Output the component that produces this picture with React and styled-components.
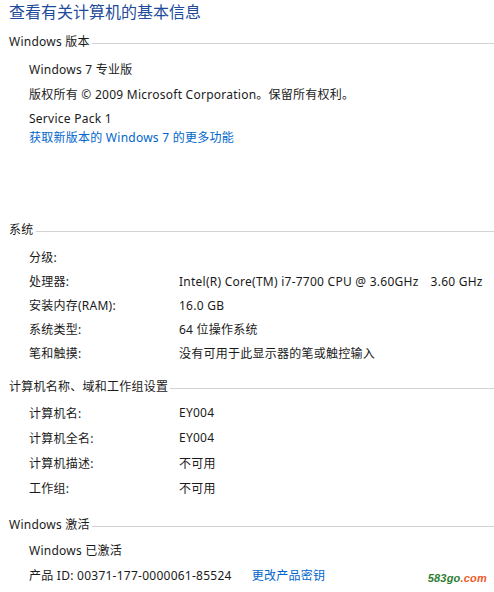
import React from "react";
import styled, { createGlobalStyle } from "styled-components";

const Global = createGlobalStyle`
  html, body { margin: 0; padding: 0; background: #fff; }
  body {
    font-family: "Noto Sans", "Noto Sans CJK SC", sans-serif;
    font-size: 12px;
    letter-spacing: 0.25px;
    color: #1a1a1a;
  }
`;

const Page = styled.div`
  width: 494px;
  height: 592px;
  padding: 0 0 0 9px;
  box-sizing: border-box;
  position: relative;
  overflow: hidden;
`;

const Title = styled.h1`
  margin: 0;
  font-family: "Noto Sans CJK SC", sans-serif;
  font-weight: 400;
  font-size: 16px;
  letter-spacing: 0;
  line-height: 22px;
  color: #1e4b9c;
`;

const Section = styled.section`
  margin-top: ${(p) => p.$top}px;
`;

const Heading = styled.div`
  display: flex;
  align-items: center;
  height: 16px;
  line-height: 16px;
  white-space: nowrap;
  &::after {
    content: "";
    flex: 1;
    height: 1px;
    margin-top: 3px;
    margin-left: 2px;
    background: #d2d2d2;
  }
`;

const List = styled.div`
  margin-top: ${(p) => p.$top}px;
  padding-left: 20px;
  display: flex;
  flex-direction: column;
`;

const Line = styled.div`
  height: ${(p) => p.$h}px;
  display: flex;
  align-items: center;
  white-space: nowrap;
  color: ${(p) => (p.$link ? "#0066cc" : "inherit")};
`;

const Label = styled.div`
  width: 150px;
  flex: none;
`;

const Value = styled.div`
  display: flex;
  gap: ${(p) => p.$gap || 0}px;
`;

const Link = styled.span`
  color: #0066cc;
  margin-left: ${(p) => p.$gap || 0}px;
`;

const Watermark = styled.div`
  position: absolute;
  right: 7px;
  bottom: 8px;
  font-family: "Liberation Sans", sans-serif;
  font-weight: 700;
  font-style: italic;
  font-size: 11px;
  letter-spacing: 0.2px;
  color: #2e7d32;
  span { color: #ee5a2a; }
`;

function Field({ label, children, h, gap }) {
  return (
    <Line $h={h}>
      <Label>{label}</Label>
      <Value $gap={gap}>{children}</Value>
    </Line>
  );
}

export default function App() {
  return (
    <Page>
      <Global />
      <Title>查看有关计算机的基本信息</Title>

      <Section $top={12}>
        <Heading>Windows 版本</Heading>
        <List $top={7}>
          <Line $h={24}>Windows 7 专业版</Line>
          <Line $h={25}>版权所有 © 2009 Microsoft Corporation。保留所有权利。</Line>
          <Line $h={24}>Service Pack 1</Line>
          <Line $h={14} $link>获取新版本的 Windows 7 的更多功能</Line>
        </List>
      </Section>

      <Section $top={78}>
        <Heading>系统</Heading>
        <List $top={7}>
          <Field h={24} label="分级:" />
          <Field h={24} label="处理器:" gap={12}>
            <span>Intel(R) Core(TM) i7-7700 CPU @ 3.60GHz</span>
            <span>3.60 GHz</span>
          </Field>
          <Field h={24} label="安装内存(RAM):">16.0 GB</Field>
          <Field h={24} label="系统类型:">64 位操作系统</Field>
          <Field h={24} label="笔和触摸:">没有可用于此显示器的笔或触控输入</Field>
        </List>
      </Section>

      <Section $top={14}>
        <Heading>计算机名称、域和工作组设置</Heading>
        <List $top={5}>
          <Field h={25} label="计算机名:">EY004</Field>
          <Field h={25} label="计算机全名:">EY004</Field>
          <Field h={25} label="计算机描述:">不可用</Field>
          <Field h={25} label="工作组:">不可用</Field>
        </List>
      </Section>

      <Section $top={17}>
        <Heading>Windows 激活</Heading>
        <List $top={4}>
          <Line $h={25}>Windows 已激活</Line>
          <Line $h={26}>
            产品 ID: 00371-177-0000061-85524<Link $gap={20}>更改产品密钥</Link>
          </Line>
        </List>
      </Section>

      <Watermark>583go<span>.com</span></Watermark>
    </Page>
  );
}
